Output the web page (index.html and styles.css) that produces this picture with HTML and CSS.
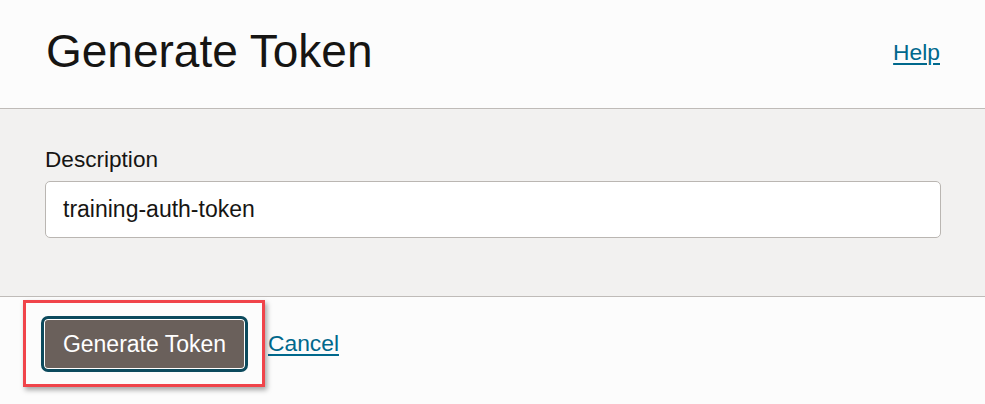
FILE: index.html
```html
<!DOCTYPE html>
<html>
<head>
<meta charset="utf-8">
<link rel="stylesheet" href="styles.css">
</head>
<body>
<div class="page">
  <header class="header">
    <h1 class="title">Generate Token</h1>
    <a class="link help" href="#">Help</a>
  </header>
  <section class="panel">
    <label class="label" for="desc">Description</label>
    <div class="input" id="desc">training-auth-token</div>
  </section>
  <footer class="footer">
    <button class="btn">Generate Token</button>
    <a class="link cancel" href="#">Cancel</a>
    <div class="highlight"></div>
  </footer>
</div>
</body>
</html>
```
FILE: styles.css
```css
* { box-sizing: border-box; }
html, body {
  margin: 0;
  padding: 0;
  background: #fcfcfc;
  font-family: "Liberation Sans", Arial, sans-serif;
  color: #161513;
}
.page {
  width: 985px;
  height: 404px;
  overflow: hidden;
  display: flex;
  flex-direction: column;
}
.header {
  height: 109px;
  padding: 0 45px 6px 46px;
  display: flex;
  align-items: center;
  justify-content: space-between;
  border-bottom: 1px solid #bfbbb8;
  background: #fcfcfc;
}
.title {
  margin: 0;
  font-size: 46px;
  font-weight: normal;
  line-height: 1;
  color: #161513;
}
.link {
  color: #00688c;
  text-decoration: underline;
  font-size: 22.8px;
  text-underline-offset: 3px;
}
.help {
  margin-top: 3px;
}
.panel {
  background: #f2f1f0;
  padding: 37px 44px 58px 45px;
  border-bottom: 1px solid #bfbbb8;
  display: flex;
  flex-direction: column;
}
.label {
  font-size: 22.6px;
  line-height: 28px;
  margin-bottom: 7px;
  color: #161513;
}
.input {
  height: 57px;
  background: #ffffff;
  border: 1px solid #bab6b2;
  border-radius: 5px;
  padding: 0 17px;
  display: flex;
  align-items: center;
  font-size: 23px;
  color: #161513;
}
.footer {
  position: relative;
  flex: 1;
  padding: 19px 0 0 41px;
  display: flex;
  align-items: flex-start;
  background: #fcfcfc;
}
.btn {
  height: 56px;
  width: 207px;
  padding: 0;
  border: 3px solid #0c4a5d;
  border-radius: 7px;
  box-shadow: inset 0 0 0 1px #ffffff;
  background: #6a605b;
  color: #ffffff;
  font-family: "Liberation Sans", Arial, sans-serif;
  font-size: 23px;
  line-height: 1;
}
.cancel {
  margin-left: 20px;
  margin-top: 14px;
}
.highlight {
  position: absolute;
  left: 23px;
  top: 3px;
  width: 242px;
  height: 87px;
  border: 3px solid #f0444a;
  box-shadow: 2px 3px 5px rgba(0,0,0,0.35);
  pointer-events: none;
}
```
